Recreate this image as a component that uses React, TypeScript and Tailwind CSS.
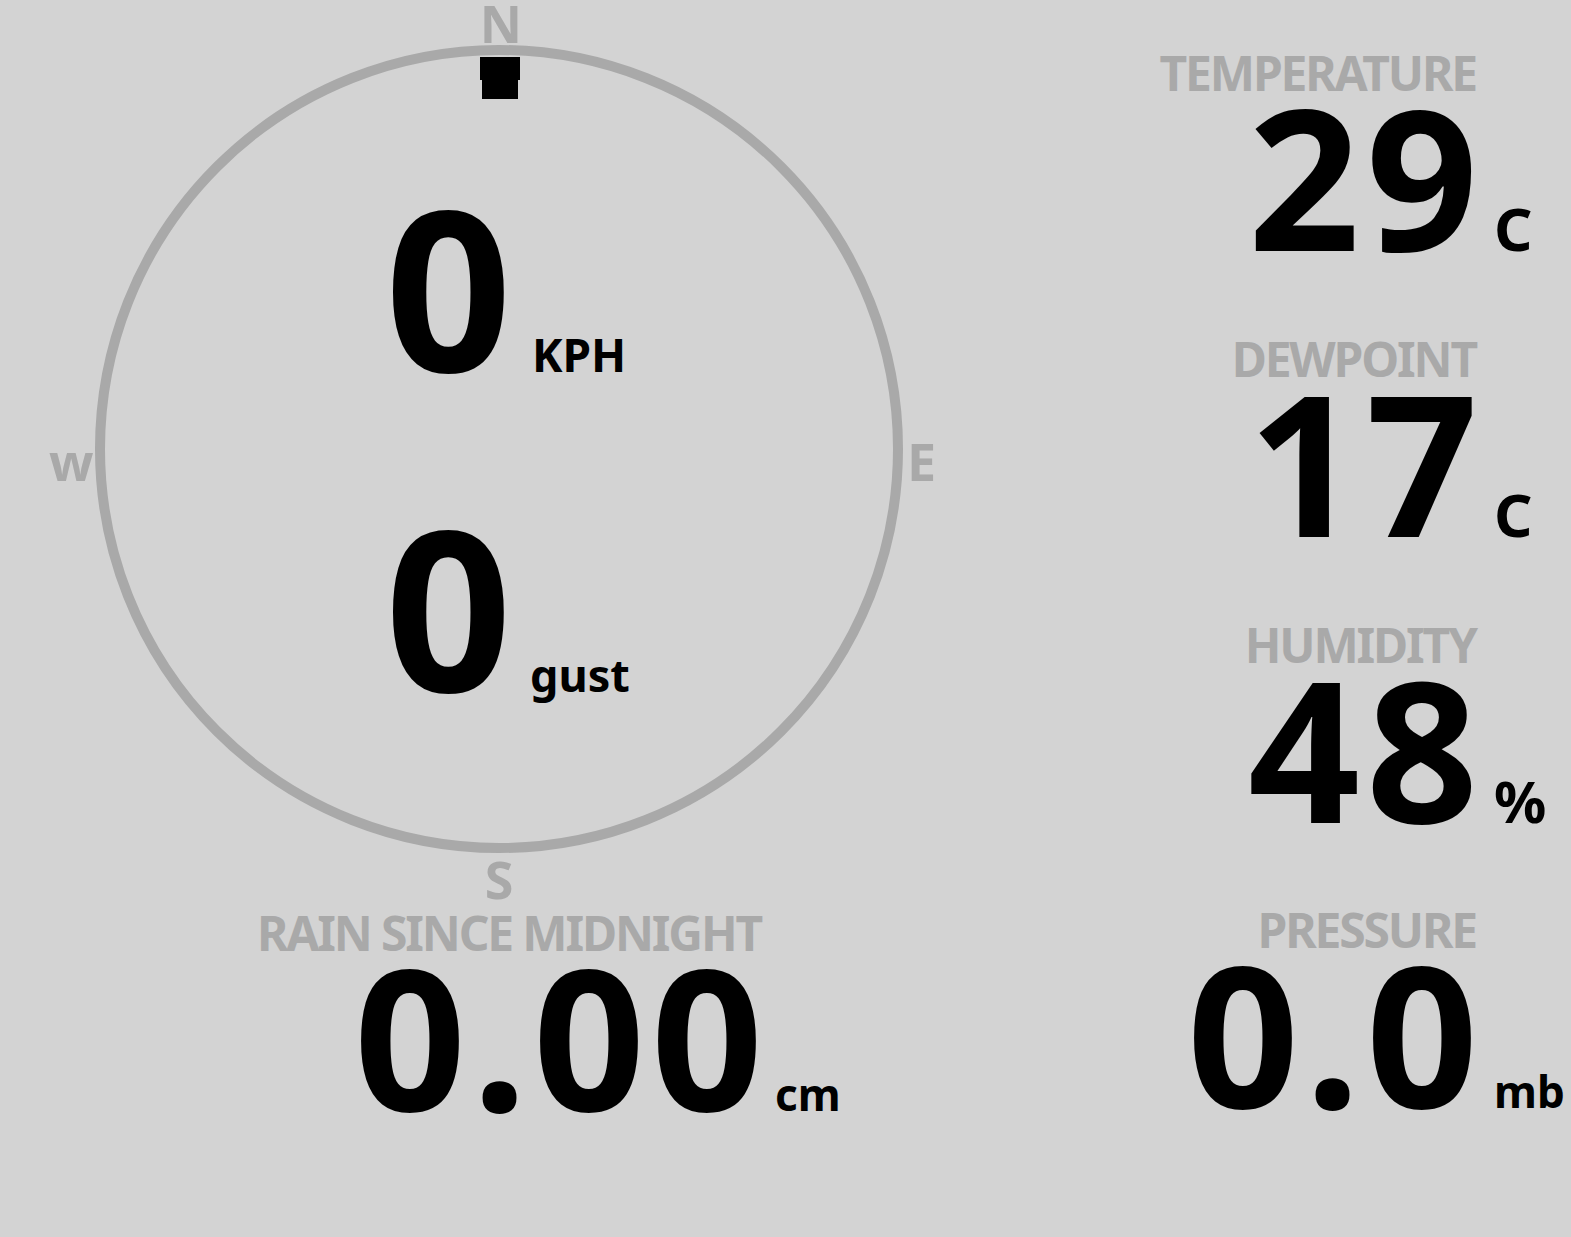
import React from "react";

const Stat = ({
  label,
  value,
  unit,
  cols,
  unitSize,
}: {
  label: string;
  value: string;
  unit: string;
  cols: string;
  unitSize: string;
}) => {
  return (
    <div className={`grid items-baseline ${cols}`}>
      <div className="text-right text-[48px] leading-none tracking-[-0.045em] text-[#a9a9a9]">{label}</div>
      <div />
      <div className="mr-[-8px] text-right text-[196px] leading-[0.8] tracking-[0.03em] text-black">
        {value}
      </div>
      <div className={`leading-[0.6] text-black ${unitSize}`}>{unit}</div>
    </div>
  );
};

const Compass = ({ speed, gust }: { speed: string; gust: string }) => {
  return (
    <div className="relative ml-[95px] mt-[45px] h-[808px] w-[808px]">
      <svg className="absolute inset-0" width="808" height="808" viewBox="0 0 808 808">
        <circle cx="404" cy="404" r="399" fill="none" stroke="#a9a9a9" strokeWidth="10" />
        {/* wind direction marker */}
        <path d="M385 12 H425 V35 H423 V54 H387 V35 H385 Z" fill="#000" />
      </svg>
      <div className="absolute left-[406px] top-[-48px] -translate-x-1/2 text-[52px] leading-none text-[#a9a9a9]">N</div>
      <div className="absolute left-[812px] top-[390px] text-[52px] leading-none text-[#a9a9a9]">E</div>
      <div className="absolute left-[404px] top-[808px] -translate-x-1/2 text-[52px] leading-none text-[#a9a9a9]">S</div>
      <div className="absolute left-[-46px] top-[390px] text-[52px] leading-none text-[#a9a9a9]">w</div>

      <div className="relative flex flex-col pl-[290px] pt-[130px]">
        <div className="flex items-baseline">
          <span className="text-[222px] leading-none text-black">{speed}</span>
          <span className="ml-[20px] text-[46px] leading-none text-black">KPH</span>
        </div>
        <div className="mt-[98px] flex items-baseline">
          <span className="text-[222px] leading-none text-black">{gust}</span>
          <span className="ml-[18px] text-[45px] leading-none text-black">gust</span>
        </div>
      </div>
    </div>
  );
};

export default function App() {
  return (
    <div className="flex min-h-screen w-full bg-[#d3d3d3] font-['Noto_Sans',sans-serif] font-bold">
      <div className="flex w-[1000px] shrink-0 flex-col">
        <Compass speed="0" gust="0" />
        <div className="mt-[56px]">
          <Stat
            label="RAIN SINCE MIDNIGHT"
            value="0.00"
            unit="cm"
            cols="grid-cols-[761px_auto] gap-x-[14px]"
            unitSize="text-[44px]"
          />
        </div>
      </div>
      <div className="flex min-w-0 flex-1 flex-col gap-[81px] pt-[49px]">
        <Stat label="TEMPERATURE" value="29" unit="C" cols="grid-cols-[476px_auto] gap-x-[18px]" unitSize="text-[60px]" />
        <Stat label="DEWPOINT" value="17" unit="C" cols="grid-cols-[476px_auto] gap-x-[18px]" unitSize="text-[60px]" />
        <Stat label="HUMIDITY" value="48" unit="%" cols="grid-cols-[476px_auto] gap-x-[18px]" unitSize="text-[58px]" />
        <Stat label="PRESSURE" value="0.0" unit="mb" cols="grid-cols-[476px_auto] gap-x-[18px]" unitSize="text-[44px]" />
      </div>
    </div>
  );
}
